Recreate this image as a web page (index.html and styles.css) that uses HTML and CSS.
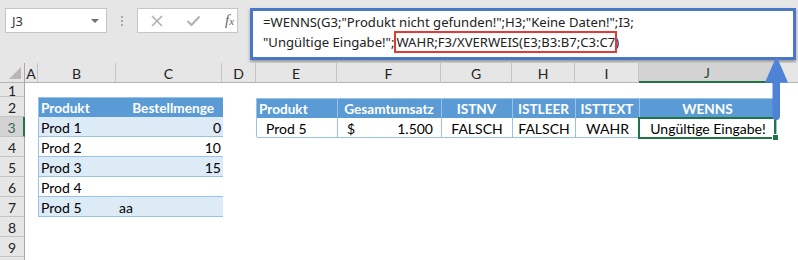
FILE: index.html
```html
<!DOCTYPE html>
<html lang="de">
<head>
<meta charset="utf-8">
<link rel="stylesheet" href="styles.css">
</head>
<body>
<div class="toolbar">
  <div class="namebox"><span>J3</span><span class="caret"></span></div>
  <div class="grip"><i></i><i></i><i></i></div>
  <div class="fxbox">
    <svg class="btn" width="14" height="12" viewBox="0 0 14 12"><path d="M2 1 L12 11 M12 1 L2 11" stroke="#b0b0b0" stroke-width="1.6" fill="none"/></svg>
    <svg class="btn" width="15" height="12" viewBox="0 0 15 12"><path d="M1.5 6 L5.5 10 L13.5 1.5" stroke="#b0b0b0" stroke-width="2" fill="none"/></svg>
    <span class="fx">f<sub>x</sub></span>
  </div>
  <div class="formula">
    <div class="fline">=WENNS(G3;"Produkt nicht gefunden!";H3;"Keine Daten!";I3;</div>
    <div class="fline">"Ungültige Eingabe!";<span class="hl">WAHR;F3/XVERWEIS(E3;B3:B7;C3:C7</span>)</div>
  </div>
</div>
<div class="sheet">
  <div class="corner"><span class="tri"></span></div>
  <div class="ch">A</div>
  <div class="ch">B</div>
  <div class="ch">C</div>
  <div class="ch">D</div>
  <div class="ch">E</div>
  <div class="ch">F</div>
  <div class="ch">G</div>
  <div class="ch">H</div>
  <div class="ch">I</div>
  <div class="ch sel">J</div>
  <div class="ch last"></div>
  <div class="rh">1</div>
  <div class="rh">2</div>
  <div class="rh sel">3</div>
  <div class="rh">4</div>
  <div class="rh">5</div>
  <div class="rh">6</div>
  <div class="rh">7</div>
  <div class="rh">8</div>
  <div class="rh">9</div>
  <div class="rh"></div>

  <div class="t1">
    <div class="th l">Produkt</div><div class="th r pr9">Bestellmenge</div>
    <div class="td band l">Prod 1</div><div class="td band r">0</div>
    <div class="td l">Prod 2</div><div class="td r">10</div>
    <div class="td band l">Prod 3</div><div class="td band r">15</div>
    <div class="td l">Prod 4</div><div class="td r"></div>
    <div class="td band l">Prod 5</div><div class="td band l">aa</div>
  </div>

  <div class="t2">
    <div class="th l">Produkt</div>
    <div class="th c">Gesamtumsatz</div>
    <div class="th c">ISTNV</div>
    <div class="th c">ISTLEER</div>
    <div class="th c">ISTTEXT</div>
    <div class="th c">WENNS</div>
    <div class="td l ind">Prod 5</div>
    <div class="td acc"><span>$</span><span>1.500</span></div>
    <div class="td c">FALSCH</div>
    <div class="td c">FALSCH</div>
    <div class="td c">WAHR</div>
    <div class="td c active">Ungültige Eingabe!</div>
  </div>
</div>
<svg class="arrow" width="36" height="75" viewBox="0 0 36 75">
  <rect x="12.5" y="26" width="7.5" height="44" rx="3.7" fill="#4f83d6"/>
  <path d="M16.5 8 L27 32 L6 32 Z" fill="#4f83d6" stroke="#4f83d6" stroke-width="1.5" stroke-linejoin="round"/>
</svg>
</body>
</html>
```
FILE: styles.css
```css
* { box-sizing: border-box; margin: 0; padding: 0; }
body {
  width: 798px;
  height: 260px;
  overflow: hidden;
  background: #fff;
  position: relative;
  font-family: "Lato", "Liberation Sans", sans-serif;
  color: #000;
}
.toolbar {
  height: 63px;
  background: #e6e6e6;
  display: flex;
  align-items: flex-start;
  padding: 8px 0 0 5px;
}
.namebox {
  width: 102px;
  height: 25px;
  background: #fff;
  border: 1px solid #c6c6c6;
  display: flex;
  align-items: center;
  justify-content: space-between;
  padding: 0 7px 0 6px;
  font-family: "Noto Sans", sans-serif;
  font-size: 13px;
  color: #333;
}
.caret {
  width: 0;
  height: 0;
  border-left: 4px solid transparent;
  border-right: 4px solid transparent;
  border-top: 4px solid #707070;
}
.grip {
  margin: 8px 14px 0 14px;
  display: flex;
  flex-direction: column;
  gap: 2px;
}
.grip i {
  display: block;
  width: 2px;
  height: 2px;
  background: #a8a8a8;
}
.fxbox {
  width: 101px;
  height: 25px;
  background: #fff;
  border: 1px solid #c6c6c6;
  display: flex;
  align-items: center;
  padding-left: 12px;
  gap: 22px;
}
.fx {
  font-family: "Liberation Serif", serif;
  font-style: italic;
  font-size: 15px;
  color: #666;
  margin-left: 2px;
}
.fx sub { font-size: 11px; vertical-align: 0; }
.formula {
  margin-left: 12px;
  width: 546px;
  height: 52px;
  background: #fff;
  border: 3px solid #4a76c6;
  box-shadow: 0 2px 3px rgba(0, 0, 0, 0.35);
  padding: 1px 0 0 10px;
  font-family: "Noto Sans", sans-serif;
  font-size: 13.1px;
  color: #222;
}
.fline { height: 20px; line-height: 20px; white-space: nowrap; }
.hl {
  margin-left: 2px;
  outline: 2px solid #e53935;
  outline-offset: 0;
}

.sheet {
  display: grid;
  grid-template-columns: 25px 13px 78px 106px 34px 81px 104px 71px 63px 64px 137px 1fr;
  grid-template-rows: 20px 14px repeat(9, 20px);
  font-size: 14px;
}
.corner {
  background: #e6e6e6;
  border-right: 1px solid #a8a8a8;
  border-bottom: 1px solid #b4b4b4;
  position: relative;
}
.tri {
  position: absolute;
  right: 3px;
  bottom: 3px;
  width: 0;
  height: 0;
  border-left: 12px solid transparent;
  border-bottom: 12px solid #b7b7b7;
}
.ch {
  background: #e6e6e6;
  border-right: 1px solid #c4c4c4;
  border-bottom: 1px solid #b4b4b4;
  display: flex;
  align-items: center;
  justify-content: center;
  color: #222;
  padding-top: 1px;
}
.ch.last { border-right: none; }
.ch.sel {
  background: #d3d3d3;
  border-bottom: 2px solid #217346;
  color: #1f4d33;
}
.rh {
  grid-column: 1;
  background: #e6e6e6;
  border-right: 1px solid #a8a8a8;
  border-bottom: 1px solid #c4c4c4;
  display: flex;
  align-items: center;
  justify-content: center;
  color: #222;
  padding-top: 1px;
}
.rh.sel {
  background: #d3d3d3;
  border-right: 2px solid #217346;
  color: #3a6a4e;
}

.t1 {
  grid-column: 3 / 5;
  grid-row: 3 / 9;
  display: grid;
  grid-template-columns: 78px 106px;
  grid-template-rows: repeat(6, 20px);
  border-left: 1px solid #9bc2e6;
}
.t2 {
  grid-column: 6 / 12;
  grid-row: 3 / 5;
  display: grid;
  grid-template-columns: 81px 104px 71px 63px 64px 137px;
  grid-template-rows: 20px 20px;
  border-left: 1px solid #9bc2e6;
  margin-top: 1px;
}
.th {
  background: #5b9bd5;
  color: #fff;
  font-weight: bold;
  font-size: 13.6px;
  display: flex;
  align-items: center;
  padding: 1px 3px 0 2px;
  white-space: nowrap;
}
.t1 .th { border-top: 1px solid #9bc2e6; }
.t2 .th { border-right: 1px solid #9bc2e6; border-top: 1px solid #9bc2e6; }
.t2 .th:last-child { border-right: none; }
.td {
  display: flex;
  align-items: center;
  padding: 2px 2px 0 2px;
  border-bottom: 1px solid #9bc2e6;
  white-space: nowrap;
  background: #fff;
}
.t2 .td { border-right: 1px solid #9bc2e6; }
.band { background: #ddebf7; }
.l { justify-content: flex-start; }
.r { justify-content: flex-end; }
.c { justify-content: center; }
.pr9 { padding-right: 9px; }
.ind { padding-left: 9px; }
.acc { justify-content: space-between; padding: 2px 8px 0 9px; }
.active { position: relative; border-right: none; }
.active::after {
  content: "";
  position: absolute;
  left: -2px;
  top: -1px;
  right: 0;
  bottom: -2px;
  border: 2px solid #217346;
}
.active::before {
  content: "";
  position: absolute;
  right: -3px;
  bottom: -4px;
  width: 5px;
  height: 5px;
  background: #217346;
  border: 1px solid #fff;
  z-index: 2;
}
.arrow {
  position: absolute;
  left: 760px;
  top: 50px;
}
```
